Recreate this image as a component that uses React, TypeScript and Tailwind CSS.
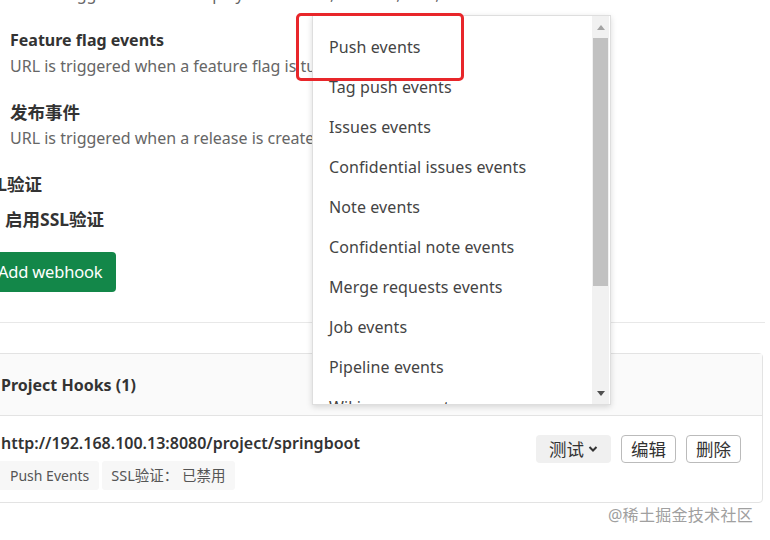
import React from "react";

const items = [
  "Push events",
  "Tag push events",
  "Issues events",
  "Confidential issues events",
  "Note events",
  "Confidential note events",
  "Merge requests events",
  "Job events",
  "Pipeline events",
  "Wiki page events",
];

export default function App() {
  return (
    <div
      className="relative w-[770px] h-[540px] overflow-hidden bg-white text-[16px] text-[#333]"
      style={{ fontFamily: '"Noto Sans", "Noto Sans CJK SC", sans-serif' }}
    >
      <div className="flex flex-col">
        <div className="h-[6px] overflow-hidden relative">
          <div className="absolute bottom-0 left-[10px] leading-[24px] text-[#666] whitespace-nowrap">
            URL is triggered when a deployment starts, finishes, fails, or is canceled
          </div>
        </div>
        <div className="pl-[10px] mt-[22px] leading-[24px] font-bold">Feature flag events</div>
        <div className="pl-[10px] mt-[2px] leading-[24px] text-[#666] whitespace-nowrap">
          URL is triggered when a feature flag is turned on or off
        </div>
        <div className="pl-[10px] mt-[22px] leading-[24px] font-bold text-[17.5px]">发布事件</div>
        <div className="pl-[10px] mt-[2px] leading-[24px] text-[#666] whitespace-nowrap">
          URL is triggered when a release is created/updated
        </div>
        <div className="-ml-[22px] mt-[22px] leading-[24px] font-bold text-[17.5px]">SSL验证</div>
        <div className="pl-[5px] mt-[11px] leading-[24px] font-bold text-[17.5px]">启用SSL验证</div>
        <div className="mt-[21px] flex">
          <button className="-ml-[14px] h-[40px] pl-[12px] pr-[14px] rounded-[4px] bg-[#138749] text-white text-[16.5px] leading-[40px] tracking-[-0.2px]">
            Add webhook
          </button>
        </div>
        <div className="mt-[30px] h-px bg-[#e8e8e8] w-[765px]" />
        <div className="mt-[30px] -ml-[16px] w-[779px] border border-[#e3e3e3] rounded-[4px]">
          <div className="h-[62px] bg-[#fafafa] border-b border-[#e3e3e3] flex items-center pl-[16px] pt-[1px] font-bold">
            Project Hooks (1)
          </div>
          <div className="flex justify-between pl-[16px] pr-[21px] pt-[15px] pb-[12px]">
            <div className="flex flex-col">
              <div className="leading-[24px] font-semibold">http://192.168.100.13:8080/project/springboot</div>
              <div className="flex gap-[3px] mt-[6px] text-[14px] text-[#555]">
                <span className="bg-[#f7f7f7] rounded-[3px] -ml-[16px] pl-[25px] pr-[10px] leading-[29px]">Push Events</span>
                <span className="bg-[#f7f7f7] rounded-[3px] px-[9px] leading-[29px] text-[14.5px]">SSL验证：&nbsp;已禁用</span>
              </div>
            </div>
            <div className="flex gap-[10px] items-start mt-[4px]">
              <button className="h-[28px] px-[13px] rounded-[4px] bg-[#f0f0f0] text-[#333] text-[17.5px] flex items-center gap-[4px]">
                测试
                <svg width="10" height="8" viewBox="0 0 10 8">
                  <path d="M1.5 2 L5 5.5 L8.5 2" fill="none" stroke="#333" strokeWidth="2" />
                </svg>
              </button>
              <button className="h-[28px] px-[9px] rounded-[4px] border border-[#bbb] bg-white text-[#333] text-[17.5px] leading-[26px]">
                编辑
              </button>
              <button className="h-[28px] px-[9px] rounded-[4px] border border-[#bbb] bg-white text-[#333] text-[17.5px] leading-[26px]">
                删除
              </button>
            </div>
          </div>
        </div>
      </div>

      <div className="absolute right-[17px] top-[503px] text-[16px] text-[#a0a0a0] tracking-[0.3px]">@稀土掘金技术社区</div>

      {/* dropdown */}
      <div className="absolute left-[312px] top-[15px] w-[299px] h-[390px] bg-white border border-[#dedede] shadow-[0_2px_6px_rgba(0,0,0,0.15)] flex overflow-hidden">
        <div className="flex-1 flex flex-col pt-[11px] overflow-hidden">
          {items.map((it) => (
            <div key={it} className="h-[40px] shrink-0 pl-[16px] leading-[40px] text-[#444] whitespace-nowrap tracking-[0.1px]">
              {it}
            </div>
          ))}
        </div>
        <div className="w-[17px] bg-[#f1f1f1] flex flex-col items-center mr-[1px]">
          <div className="h-[22px] flex items-center justify-center">
            <svg width="8" height="5" viewBox="0 0 8 5"><path d="M0 5 L4 0 L8 5 Z" fill="#a3a3a3" /></svg>
          </div>
          <div className="w-[15px] h-[248px] bg-[#c1c1c1]" />
          <div className="flex-1" />
          <div className="h-[22px] flex items-center justify-center">
            <svg width="8" height="5" viewBox="0 0 8 5"><path d="M0 0 L8 0 L4 5 Z" fill="#505050" /></svg>
          </div>
        </div>
      </div>

      {/* red annotation */}
      <div className="absolute left-[296px] top-[13px] w-[168px] h-[68px] border-[3px] border-[#e8262a] rounded-[5px]" />
    </div>
  );
}
